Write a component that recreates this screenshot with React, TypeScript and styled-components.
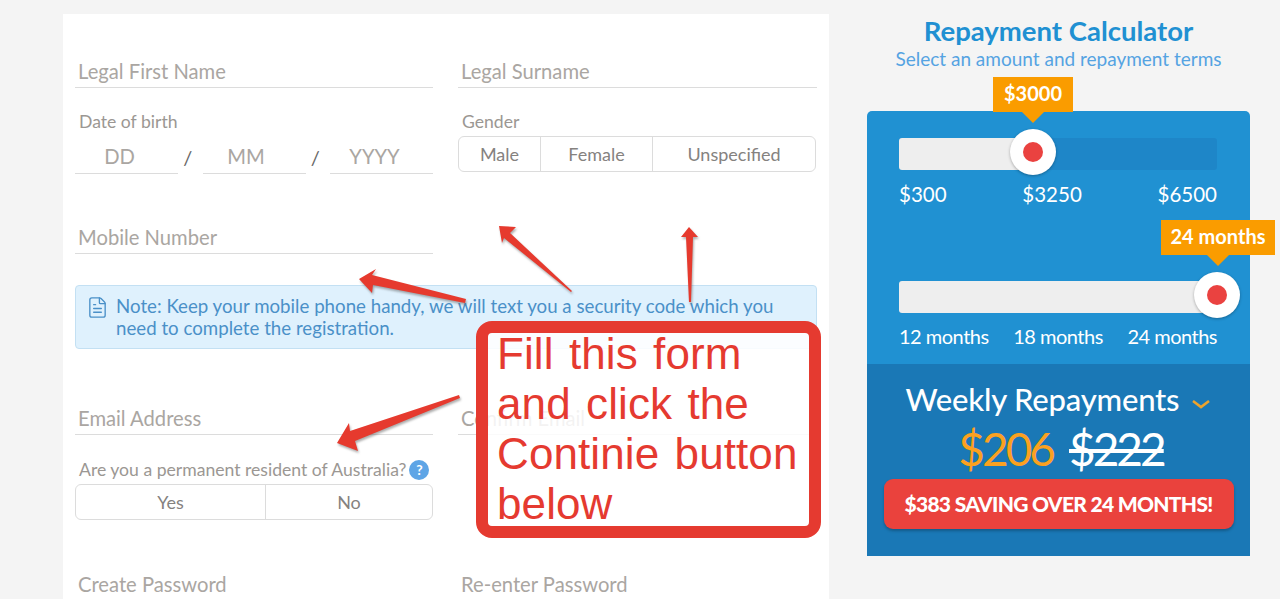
import React from 'react';
import styled, { createGlobalStyle } from 'styled-components';
import { FileText } from 'lucide-react';

const GlobalStyle = createGlobalStyle`
  html, body {
    margin: 0;
    padding: 0;
    height: 599px;
    overflow: hidden;
    background: #f4f4f4;
    font-family: Lato, 'Liberation Sans', sans-serif;
  }
  * { box-sizing: border-box; }
`;

const Page = styled.div`
  position: relative;
  width: 1280px;
  height: 599px;
  overflow: hidden;
  display: flex;
  align-items: flex-start;
  padding: 14px 0 0 63px;
`;

const FormCard = styled.div`
  width: 766px;
  height: 700px;
  background: #fff;
  padding: 0 12px;
  flex-shrink: 0;
`;

const Row = styled.div<{ $top: number }>`
  display: grid;
  grid-template-columns: 358px 359px;
  column-gap: 25px;
  margin-top: ${({ $top }) => $top}px;
`;

const UnderlineField = styled.div`
  height: 34px;
  border-bottom: 1px solid #dcdcdc;
  padding: 4px 0 0 3px;
  font-size: 20.2px;
  line-height: 26px;
  color: #aaa6a2;
  white-space: nowrap;
`;

const FieldLabel = styled.div`
  font-size: 17.6px;
  line-height: 20px;
  color: #9b9793;
  padding-left: 4px;
  display: flex;
  align-items: center;
  gap: 3px;
  white-space: nowrap;
`;

const DateRow = styled.div`
  display: grid;
  grid-template-columns: 103px 1fr 103px 1fr 103px;
  margin-top: 2px;
  height: 40px;
`;

const DatePart = styled.div<{ $shift: number }>`
  border-bottom: 1px solid #dcdcdc;
  font-size: 20.2px;
  line-height: 30px;
  padding-top: 7px;
  color: #aaa6a2;
  text-align: center;
  padding-right: ${({ $shift }) => $shift}px;
`;

const DateSlash = styled.div`
  font-size: 20px;
  color: #666;
  text-align: center;
  line-height: 30px;
  padding-top: 8px;
  padding-right: 5px;
`;

const Segmented = styled.div<{ $columns: string; $top: number }>`
  display: grid;
  grid-template-columns: ${({ $columns }) => $columns};
  height: 36px;
  margin-top: ${({ $top }) => $top}px;
  border: 1px solid #dcdcdc;
  border-radius: 6px;
`;

const GenderBox = styled.div`
  width: 358px;
`;

const Segment = styled.div`
  display: flex;
  align-items: center;
  justify-content: center;
  font-size: 18px;
  color: #85827f;
  & + & { border-left: 1px solid #dcdcdc; }
`;

const Note = styled.div`
  display: flex;
  gap: 7px;
  height: 64px;
  margin-top: 31px;
  padding: 9px 38px 0 10px;
  background: #dff1fd;
  border: 1px solid #c3e0f3;
  border-radius: 4px;
  font-size: 18.7px;
  line-height: 22px;
  color: #4a90c8;
  svg { flex-shrink: 0; margin-top: 1px; }
`;

const HelpBadge = styled.span`
  display: inline-flex;
  align-items: center;
  justify-content: center;
  width: 20px;
  height: 20px;
  border-radius: 50%;
  background: #5ea5e6;
  color: #fff;
  font-size: 14px;
  font-weight: 700;
`;

const Calculator = styled.div`
  width: 383px;
  margin-left: 38px;
  flex-shrink: 0;
  display: flex;
  flex-direction: column;
  align-items: center;
`;

const CalcTitle = styled.div`
  font-family: Lato, sans-serif;
  font-weight: 700;
  font-size: 27.5px;
  line-height: 34px;
  color: #2090d2;
  white-space: nowrap;
`;

const CalcSub = styled.div`
  font-family: Lato, sans-serif;
  font-size: 19px;
  line-height: 22px;
  color: #55a3e2;
  white-space: nowrap;
`;

const Panel = styled.div`
  width: 100%;
  height: 445px;
  margin-top: 41px;
  border-radius: 5px 5px 0 0;
  background: #2091d2;
  display: flex;
  flex-direction: column;
`;

const SliderArea = styled.div`
  height: 253px;
  padding: 27px 33px 0 32px;
`;

const Track = styled.div<{ $top?: number }>`
  position: relative;
  height: 32px;
  margin-top: ${({ $top }) => $top ?? 0}px;
  background: #1e86c8;
  border-radius: 3px;
`;

const TrackFill = styled.div`
  height: 100%;
  background: #eeeeee;
  border-radius: 3px 0 0 3px;
`;

const Handle = styled.div`
  position: absolute;
  top: -9px;
  width: 46px;
  height: 46px;
  margin-left: -23px;
  border-radius: 50%;
  background: #fff;
  box-shadow: 0 1px 3px rgba(0, 0, 0, 0.3);
  display: flex;
  align-items: center;
  justify-content: center;
  &::after {
    content: '';
    width: 20px;
    height: 20px;
    border-radius: 50%;
    background: #ea4240;
  }
`;

const Bubble = styled.div<{ $left: number; $width: number; $arrow: number }>`
  position: absolute;
  top: -61px;
  left: ${({ $left }) => $left}px;
  width: ${({ $width }) => $width}px;
  height: 35px;
  background: #fa9c00;
  color: #fff;
  font-family: Lato, sans-serif;
  font-weight: 700;
  font-size: 20px;
  line-height: 33px;
  text-align: center;
  white-space: nowrap;
  &::after {
    content: '';
    position: absolute;
    top: 35px;
    left: ${({ $arrow }) => $arrow}px;
    border: 11px solid transparent;
    border-bottom: 0;
    border-top-color: #fa9c00;
  }
`;

const ScaleRow = styled.div<{ $tight?: boolean }>`
  display: flex;
  justify-content: space-between;
  margin-top: ${({ $tight }) => ($tight ? 10 : 11)}px;
  font-family: Lato, sans-serif;
  font-size: ${({ $tight }) => ($tight ? 20 : 20.5)}px;
  letter-spacing: ${({ $tight }) => ($tight ? -0.5 : 0)}px;
  line-height: 26px;
  color: #fff;
`;

const Summary = styled.div`
  flex: 1;
  background: #1a78b6;
  padding: 16px 16px 0 16px;
  display: flex;
  flex-direction: column;
  align-items: center;
`;

const SummaryTitle = styled.div`
  font-family: Lato, sans-serif;
  font-weight: 500;
  font-size: 31px;
  letter-spacing: -0.2px;
  line-height: 38px;
  color: #fff;
  display: flex;
  align-items: center;
  gap: 12px;
  white-space: nowrap;
  svg { margin-top: 10px; }
`;

const Prices = styled.div`
  display: flex;
  gap: 16px;
  margin-top: 4px;
  padding-left: 5px;
  font-family: Lato, sans-serif;
  font-size: 46px;
  letter-spacing: -3px;
  line-height: 54px;
`;

const Price = styled.span`
  color: #fba120;
`;

const OldPrice = styled.span`
  color: #fff;
  text-decoration: line-through;
`;

const SavingBadge = styled.div`
  width: 350px;
  height: 50px;
  margin-top: 3px;
  background: #ea423d;
  border-radius: 9px;
  box-shadow: 0 2px 3px rgba(0, 0, 0, 0.25);
  color: #fff;
  font-family: Lato, sans-serif;
  font-weight: 900;
  font-size: 21px;
  letter-spacing: -0.7px;
  line-height: 50px;
  text-align: center;
  white-space: nowrap;
`;

const Arrows = styled.svg`
  position: absolute;
  top: 0;
  left: 0;
  pointer-events: none;
  filter: drop-shadow(1px 2px 1px rgba(90, 90, 90, 0.5));
`;

const Callout = styled.div`
  position: absolute;
  top: 321px;
  left: 476px;
  width: 345px;
  height: 217px;
  background: rgba(255, 255, 255, 0.86);
  border: 12px solid #e53a30;
  border-radius: 16px;
  padding: 0 0 0 9px;
  font-family: 'Liberation Sans', Arial, sans-serif;
  font-size: 44px;
  line-height: 50px;
  letter-spacing: 0.1px;
  word-spacing: 3px;
  color: #e53a30;
`;

const CalloutText = styled.div`
  margin-top: -4px;
`;

const App = () => {
    return (
        <Page>
            <GlobalStyle />
            <FormCard>
                <Row $top={40}>
                    <UnderlineField>Legal First Name</UnderlineField>
                    <UnderlineField>Legal Surname</UnderlineField>
                </Row>
                <Row $top={24}>
                    <div>
                        <FieldLabel>Date of birth</FieldLabel>
                        <DateRow>
                            <DatePart $shift={14}>DD</DatePart>
                            <DateSlash>/</DateSlash>
                            <DatePart $shift={16}>MM</DatePart>
                            <DateSlash>/</DateSlash>
                            <DatePart $shift={14}>YYYY</DatePart>
                        </DateRow>
                    </div>
                    <GenderBox>
                        <FieldLabel>Gender</FieldLabel>
                        <Segmented $columns="81px 112px 1fr" $top={4}>
                            <Segment>Male</Segment>
                            <Segment>Female</Segment>
                            <Segment>Unspecified</Segment>
                        </Segmented>
                    </GenderBox>
                </Row>
                <Row $top={46}>
                    <UnderlineField>Mobile Number</UnderlineField>
                </Row>
                <Note>
                    <FileText size={23} strokeWidth={1.4} color="#4a90c8" />
                    <div>
                        Note: Keep your mobile phone handy, we will text you a security code which you
                        need to complete the registration.
                    </div>
                </Note>
                <Row $top={52}>
                    <UnderlineField>Email Address</UnderlineField>
                    <UnderlineField>Confirm Email</UnderlineField>
                </Row>
                <Row $top={25}>
                    <FieldLabel>
                        Are you a permanent resident of Australia?
                        <HelpBadge>?</HelpBadge>
                    </FieldLabel>
                </Row>
                <Row $top={4}>
                    <Segmented $columns="189px 1fr" $top={0}>
                        <Segment>Yes</Segment>
                        <Segment>No</Segment>
                    </Segmented>
                </Row>
                <Row $top={47}>
                    <UnderlineField>Create Password</UnderlineField>
                    <UnderlineField>Re-enter Password</UnderlineField>
                </Row>
            </FormCard>
            <Calculator>
                <CalcTitle>Repayment Calculator</CalcTitle>
                <CalcSub>Select an amount and repayment terms</CalcSub>
                <Panel>
                    <SliderArea>
                        <Track>
                            <TrackFill style={{ width: '42%' }} />
                            <Handle style={{ left: '42%' }} />
                            <Bubble $left={94} $width={80} $arrow={29}>$3000</Bubble>
                        </Track>
                        <ScaleRow>
                            <span>$300</span>
                            <span>$3250</span>
                            <span>$6500</span>
                        </ScaleRow>
                        <Track $top={74}>
                            <TrackFill style={{ width: '100%' }} />
                            <Handle style={{ left: '100%' }} />
                            <Bubble $left={262} $width={114} $arrow={46}>24 months</Bubble>
                        </Track>
                        <ScaleRow $tight>
                            <span>12 months</span>
                            <span>18 months</span>
                            <span>24 months</span>
                        </ScaleRow>
                    </SliderArea>
                    <Summary>
                        <SummaryTitle>
                            Weekly Repayments
                            <svg width="20" height="10" viewBox="0 0 20 10">
                                <path d="M2 2 L10 8 L18 2" fill="none" stroke="#eda32c" strokeWidth="2.6" />
                            </svg>
                        </SummaryTitle>
                        <Prices>
                            <Price>$206</Price>
                            <OldPrice>$222</OldPrice>
                        </Prices>
                        <SavingBadge>$383 SAVING OVER 24 MONTHS!</SavingBadge>
                    </Summary>
                </Panel>
            </Calculator>
            <Arrows width="1280" height="599" viewBox="0 0 1280 599">
                <g fill="#e63a2e">
                    <polygon points="499,226 516,227 510,233 572,291 571,292 504,238 502,243" />
                    <polygon points="689,227 698,237 693,237 691,302 689,302 686,237 681,237" />
                    <polygon points="359,279 376,269 372,275 466,299 465,303 373,285 372,293" />
                    <polygon points="337,443 349,423 350,431 459,395 460,398 355,441 358,451" />
                </g>
            </Arrows>
            <Callout>
                <CalloutText>Fill this form and click the Continie button below</CalloutText>
            </Callout>
        </Page>
    );
};

export default App;
